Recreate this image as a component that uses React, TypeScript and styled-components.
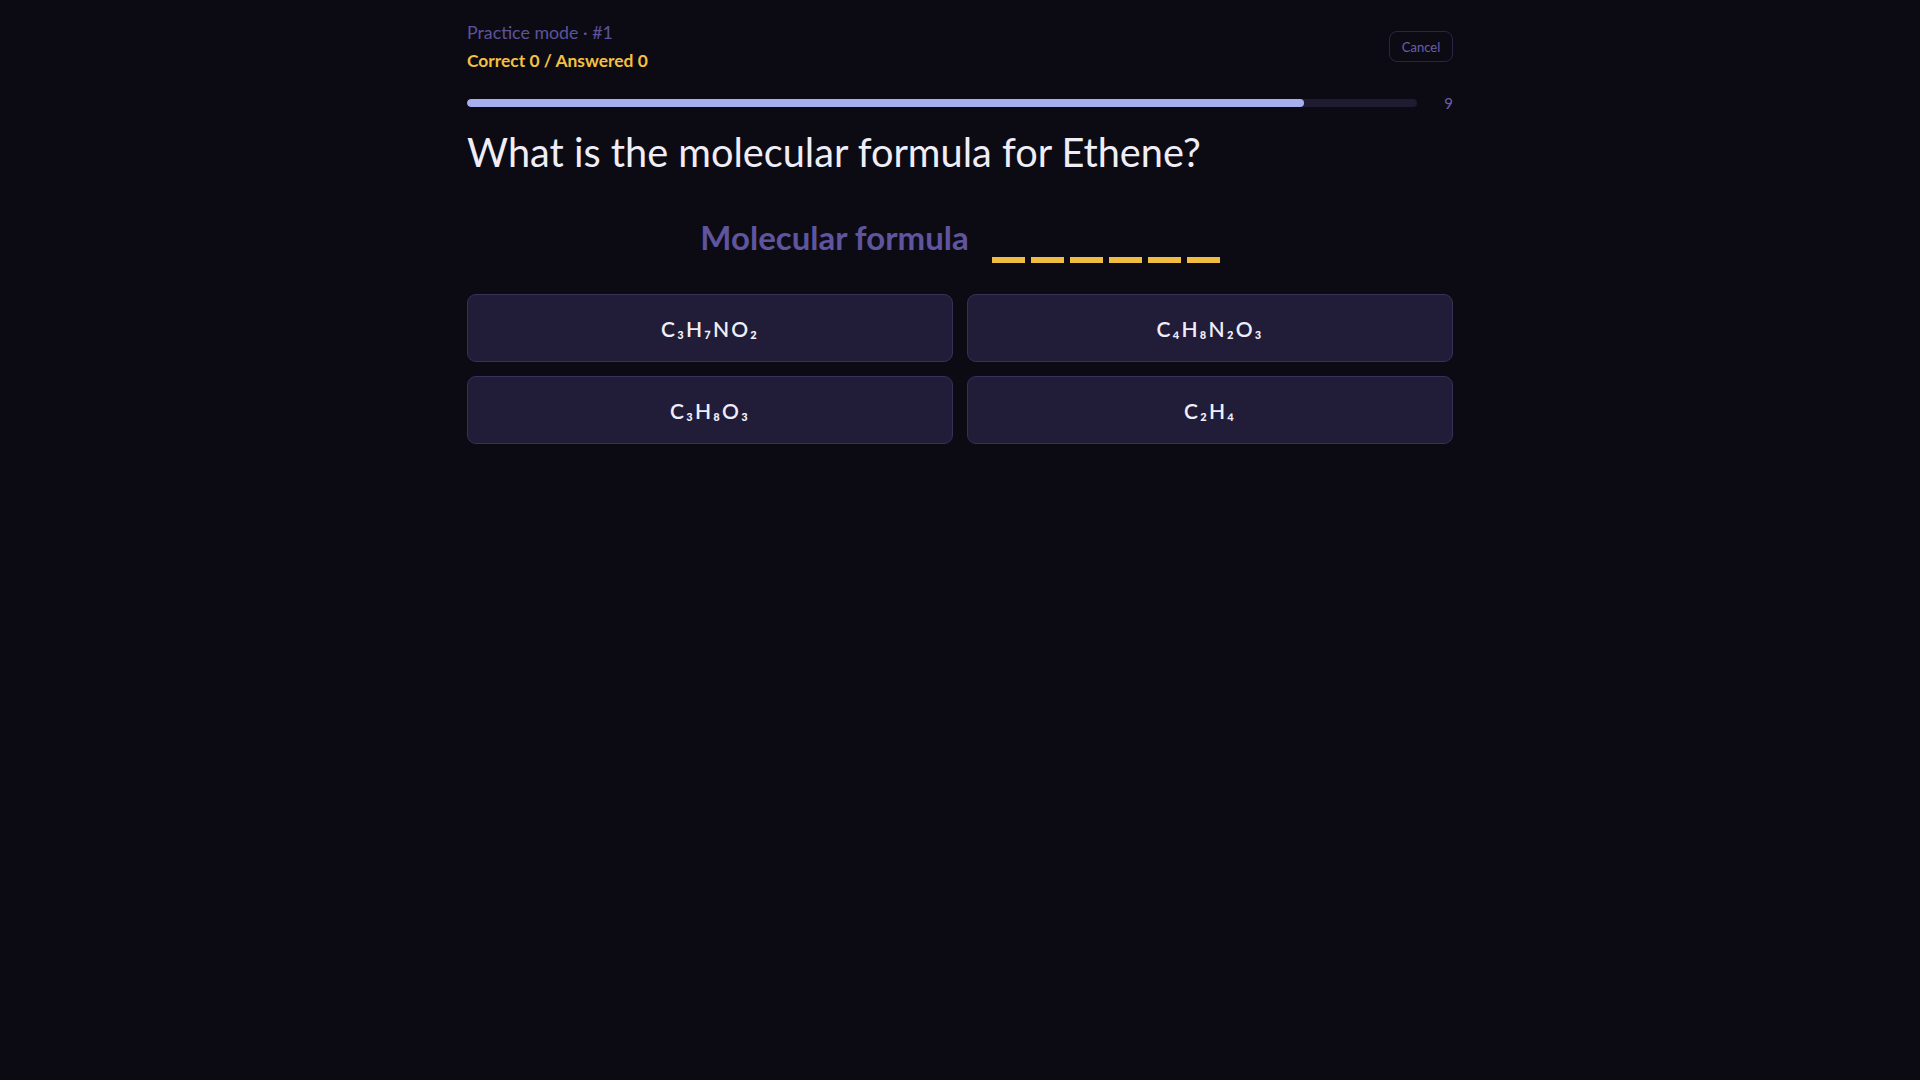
import { createGlobalStyle, styled } from 'styled-components';

const GlobalStyle = createGlobalStyle`
    html, body {
        margin: 0;
        padding: 0;
        background: #0c0b13;
        min-height: 100vh;
    }
    body {
        font-family: Lato, "Noto Sans", sans-serif;
        color: #ecebf7;
    }
`;

interface Choice {
    id: number;
    formula: string;
}

const choices: Choice[] = [
    { id: 1, formula: 'C₃H₇NO₂' },
    { id: 2, formula: 'C₄H₈N₂O₃' },
    { id: 3, formula: 'C₃H₈O₃' },
    { id: 4, formula: 'C₂H₄' },
];

const timeLeft = 9;
const progress = 88.1;

function App() {
    return (
        <>
            <GlobalStyle />
            <Page>
                <Header>
                    <Meta>
                        <ModeLine>Practice mode · #1</ModeLine>
                        <ScoreLine>Correct 0 / Answered 0</ScoreLine>
                    </Meta>
                    <CancelButton>Cancel</CancelButton>
                </Header>
                <TimerRow>
                    <Track>
                        <Fill style={{ width: `${progress}%` }} />
                    </Track>
                    <TimerCount>{timeLeft}</TimerCount>
                </TimerRow>
                <Question>What is the molecular formula for Ethene?</Question>
                <Prompt>
                    <PromptLabel>Molecular formula</PromptLabel>
                    <Blanks>
                        {Array.from({ length: 6 }).map((_, i) => (
                            <Blank key={i} />
                        ))}
                    </Blanks>
                </Prompt>
                <ChoiceGrid>
                    {choices.map((choice) => (
                        <ChoiceButton key={choice.id}>{choice.formula}</ChoiceButton>
                    ))}
                </ChoiceGrid>
            </Page>
        </>
    );
}

const Page = styled.div`
    width: 986px;
    margin: 0 auto;
    padding-top: 21px;
`;

const Header = styled.div`
    display: flex;
    justify-content: space-between;
    align-items: center;
`;

const Meta = styled.div`
    display: flex;
    flex-direction: column;
    gap: 7px;
`;

const ModeLine = styled.div`
    font-size: 17.8px;
    line-height: 22px;
    color: #5d539b;
`;

const ScoreLine = styled.div`
    font-size: 17.4px;
    line-height: 22px;
    font-weight: 700;
    color: #f4c041;
`;

const CancelButton = styled.button`
    width: 64px;
    height: 31px;
    border: 1px solid #2a2544;
    border-radius: 8px;
    background: transparent;
    color: #6a5fae;
    font-family: inherit;
    font-size: 13px;
    cursor: pointer;
    padding: 0;
`;

const TimerRow = styled.div`
    display: flex;
    align-items: center;
    gap: 27px;
    margin-top: 22px;
`;

const Track = styled.div`
    flex: 1;
    height: 8px;
    border-radius: 4px;
    background: #1f1b31;
    overflow: hidden;
`;

const Fill = styled.div`
    height: 100%;
    border-radius: 4px;
    background: #a7aff0;
`;

const TimerCount = styled.span`
    font-size: 15px;
    color: #6a5fae;
    width: 9px;
    text-align: right;
`;

const Question = styled.h1`
    margin: 15px 0 0;
    font-size: 39.7px;
    line-height: 50px;
    font-weight: 400;
    color: #efeef8;
`;

const Prompt = styled.div`
    display: flex;
    justify-content: center;
    align-items: flex-start;
    gap: 23px;
    margin-top: 40px;
`;

const PromptLabel = styled.div`
    font-size: 33px;
    line-height: 40px;
    font-weight: 700;
    color: #5f559e;
`;

const Blanks = styled.div`
    display: flex;
    gap: 6px;
    margin-top: 40px;
`;

const Blank = styled.span`
    width: 33px;
    height: 6px;
    background: #f1bd40;
`;

const ChoiceGrid = styled.div`
    display: grid;
    grid-template-columns: 1fr 1fr;
    gap: 14px;
    margin-top: 31px;
`;

const ChoiceButton = styled.button`
    height: 68px;
    border: 1px solid #37305a;
    border-radius: 9px;
    background: #211c37;
    color: #efeef8;
    font-family: Lato, "Noto Sans", sans-serif;
    font-size: 21px;
    font-weight: 600;
    letter-spacing: 2px;
    cursor: pointer;
`;

export default App;
